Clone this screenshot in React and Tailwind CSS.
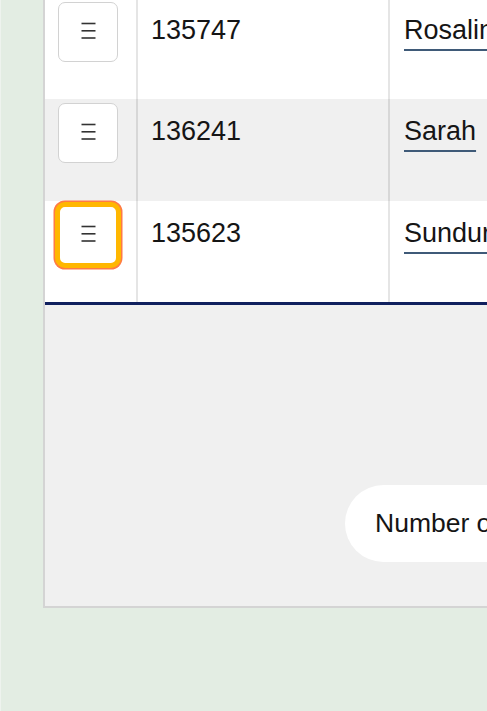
import React from "react";

function Burger() {
  return (
    <svg width="15" height="17" viewBox="0 0 15 17" fill="none">
      <line x1="0.5" y1="1.5" x2="14.5" y2="1.5" stroke="#333" strokeWidth="1.6" />
      <line x1="0.5" y1="8.8" x2="14.5" y2="8.8" stroke="#333" strokeWidth="1.6" />
      <line x1="0.5" y1="16" x2="14.5" y2="16" stroke="#333" strokeWidth="1.6" />
    </svg>
  );
}

function Row({ id, name, gray, focused, h, first }) {
  return (
    <div
      className={
        "flex " +
        (gray ? "bg-[#f0f0f0] " : "bg-white ") +
        (first ? "-mt-[2px] " : "")
      }
      style={{ height: h }}
    >
      <div className="w-[93px] shrink-0 border-r-2 border-[rgba(0,0,0,0.1)] pl-[13px] pt-[4px]">
        <button
          className={
            "w-[60px] h-[60px] rounded-[7px] bg-white flex items-center justify-center pb-[3px] " +
            (focused
              ? "border-2 border-[#ffb700] shadow-[0_0_0_3px_#ffb700,0_0_0_4.5px_#ff7a45]"
              : "border-[1.5px] border-[#d2d2d2]")
          }
        >
          <Burger />
        </button>
      </div>
      <div className="w-[252px] shrink-0 border-r-2 border-[rgba(0,0,0,0.1)] pl-[13px] pt-[17px]">
        <span className="text-[27px] leading-[31px] text-[#151515]">{id}</span>
      </div>
      <div className="flex-1 pl-[14px] pt-[17px]">
        <span className="text-[27px] leading-[31px] text-[#151515] whitespace-nowrap underline decoration-2 underline-offset-[10px] decoration-[#3f5a78]">
          {name}
        </span>
      </div>
    </div>
  );
}

export default function App() {
  return (
    <div
      className="w-[487px] h-[711px] overflow-hidden bg-[#e3ede3] border-l border-[#eef3ee]"
      style={{ fontFamily: "'Liberation Sans', Arial, sans-serif" }}
    >
      <div className="ml-[42px] w-[620px] h-[608px] bg-[#f0f0f0] border-l-2 border-b-2 border-[#d4d4d4] flex flex-col overflow-hidden">
        <div className="border-b-[3px] border-[#10205e]">
          <Row first h={101} id="135747" name="Rosalind Franklin" />
          <Row gray h={102} id="136241" name="Sarah" />
          <Row focused h={101} id="135623" name="Sundurr Bayar" />
        </div>
        <div className="pt-[180px] pl-[300px]">
          <div className="h-[77px] w-[320px] rounded-full bg-white flex items-center pl-[30px]">
            <span className="text-[26.5px] text-[#151515] whitespace-nowrap">Number of rows</span>
          </div>
        </div>
      </div>
    </div>
  );
}
